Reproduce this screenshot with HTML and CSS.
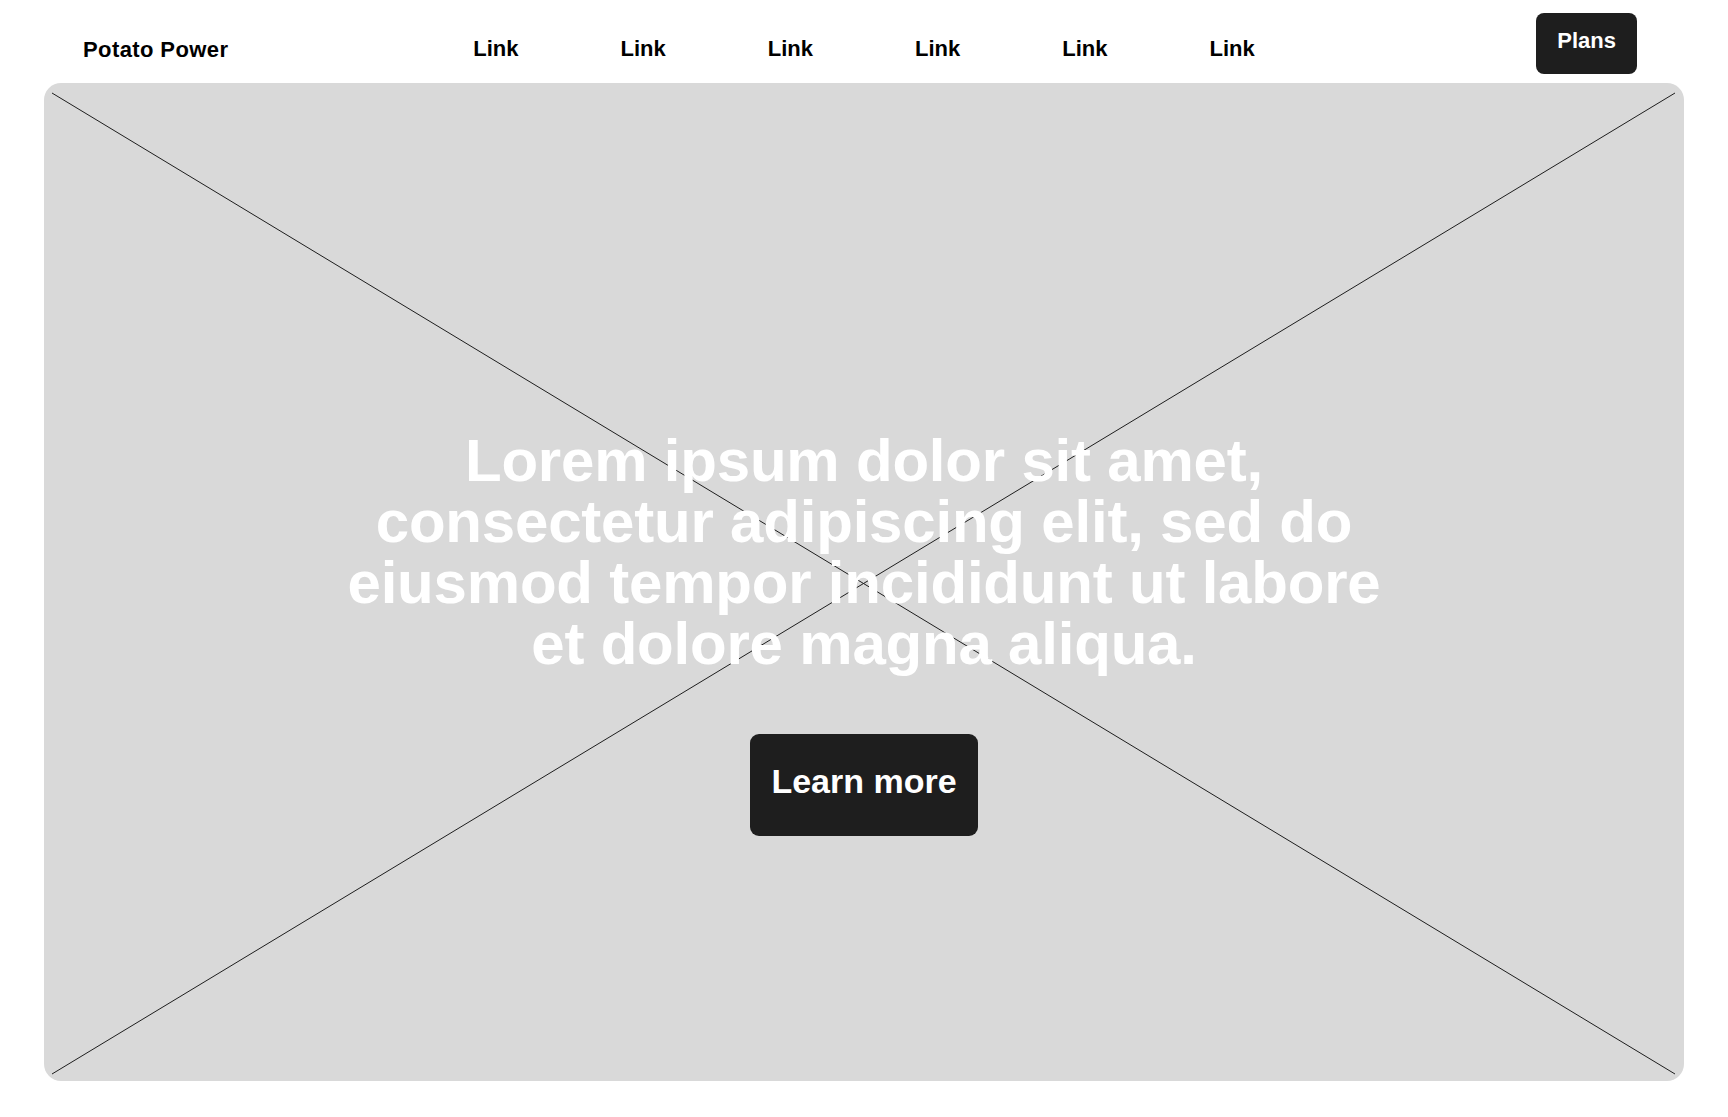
FILE: index.html
```html
<!DOCTYPE html>
<html lang="en">
<head>
<meta charset="utf-8">
<title>Potato Power</title>
<link rel="stylesheet" href="styles.css">
</head>
<body>
<header class="site-header">
  <a class="brand" href="#">Potato Power</a>
  <nav class="main-nav">
    <a href="#">Link</a>
    <a href="#">Link</a>
    <a href="#">Link</a>
    <a href="#">Link</a>
    <a href="#">Link</a>
    <a href="#">Link</a>
  </nav>
  <a class="plans-btn" href="#">Plans</a>
</header>
<main>
  <section class="hero">
    <svg class="hero-placeholder" preserveAspectRatio="none" aria-hidden="true">
      <line x1="0" y1="0" x2="100%" y2="100%"></line>
      <line x1="100%" y1="0" x2="0" y2="100%"></line>
    </svg>
    <div class="hero-content">
      <h1 class="hero-title">Lorem ipsum dolor sit amet, consectetur adipiscing elit, sed do eiusmod tempor incididunt ut labore et dolore magna aliqua.</h1>
      <a class="hero-btn" href="#">Learn more</a>
    </div>
  </section>
</main>
</body>
</html>
```

FILE: styles.css
```css
* {
  box-sizing: border-box;
}

html, body {
  margin: 0;
  padding: 0;
  background: #ffffff;
}

body {
  font-family: "Liberation Sans", Arial, sans-serif;
  font-weight: 700;
  color: #000;
}

a {
  text-decoration: none;
  color: inherit;
}

.site-header {
  height: 83px;
  padding: 0 87px;
  display: grid;
  grid-template-columns: 1fr auto 1fr;
  align-items: start;
}

.brand {
  justify-self: start;
  margin-top: 39px;
  margin-left: -4px;
  font-size: 22px;
  line-height: 22px;
  letter-spacing: 0.4px;
}

.main-nav {
  display: flex;
  gap: 102px;
  margin-top: 38px;
  font-size: 22px;
  line-height: 22px;
}

.plans-btn {
  justify-self: end;
  margin-top: 13px;
  margin-right: 4px;
  background: #1e1e1e;
  color: #fff;
  font-size: 22px;
  line-height: 22px;
  padding: 17px 21px 22px;
  border-radius: 8px;
}

.hero {
  position: relative;
  margin: 0 44px;
  height: 998px;
  background: #d9d9d9;
  border-radius: 17px;
  display: flex;
  flex-direction: column;
  align-items: center;
  justify-content: center;
  padding-top: 102px;
}

.hero-placeholder {
  position: absolute;
  top: 10px;
  left: 8px;
  width: calc(100% - 17px);
  height: calc(100% - 17px);
  overflow: visible;
}

.hero-placeholder line {
  stroke: #1e1e1e;
  stroke-width: 1;
}

.hero-content {
  position: relative;
  display: flex;
  flex-direction: column;
  align-items: center;
  gap: 60px;
}

.hero-title {
  margin: 0;
  max-width: 1080px;
  text-align: center;
  color: #fff;
  font-size: 60px;
  line-height: 61px;
  font-weight: 700;
  letter-spacing: -0.2px;
}

.hero-btn {
  background: #1e1e1e;
  color: #fff;
  font-size: 34px;
  line-height: 34px;
  padding: 30px 21px 38px;
  border-radius: 9px;
}
```
